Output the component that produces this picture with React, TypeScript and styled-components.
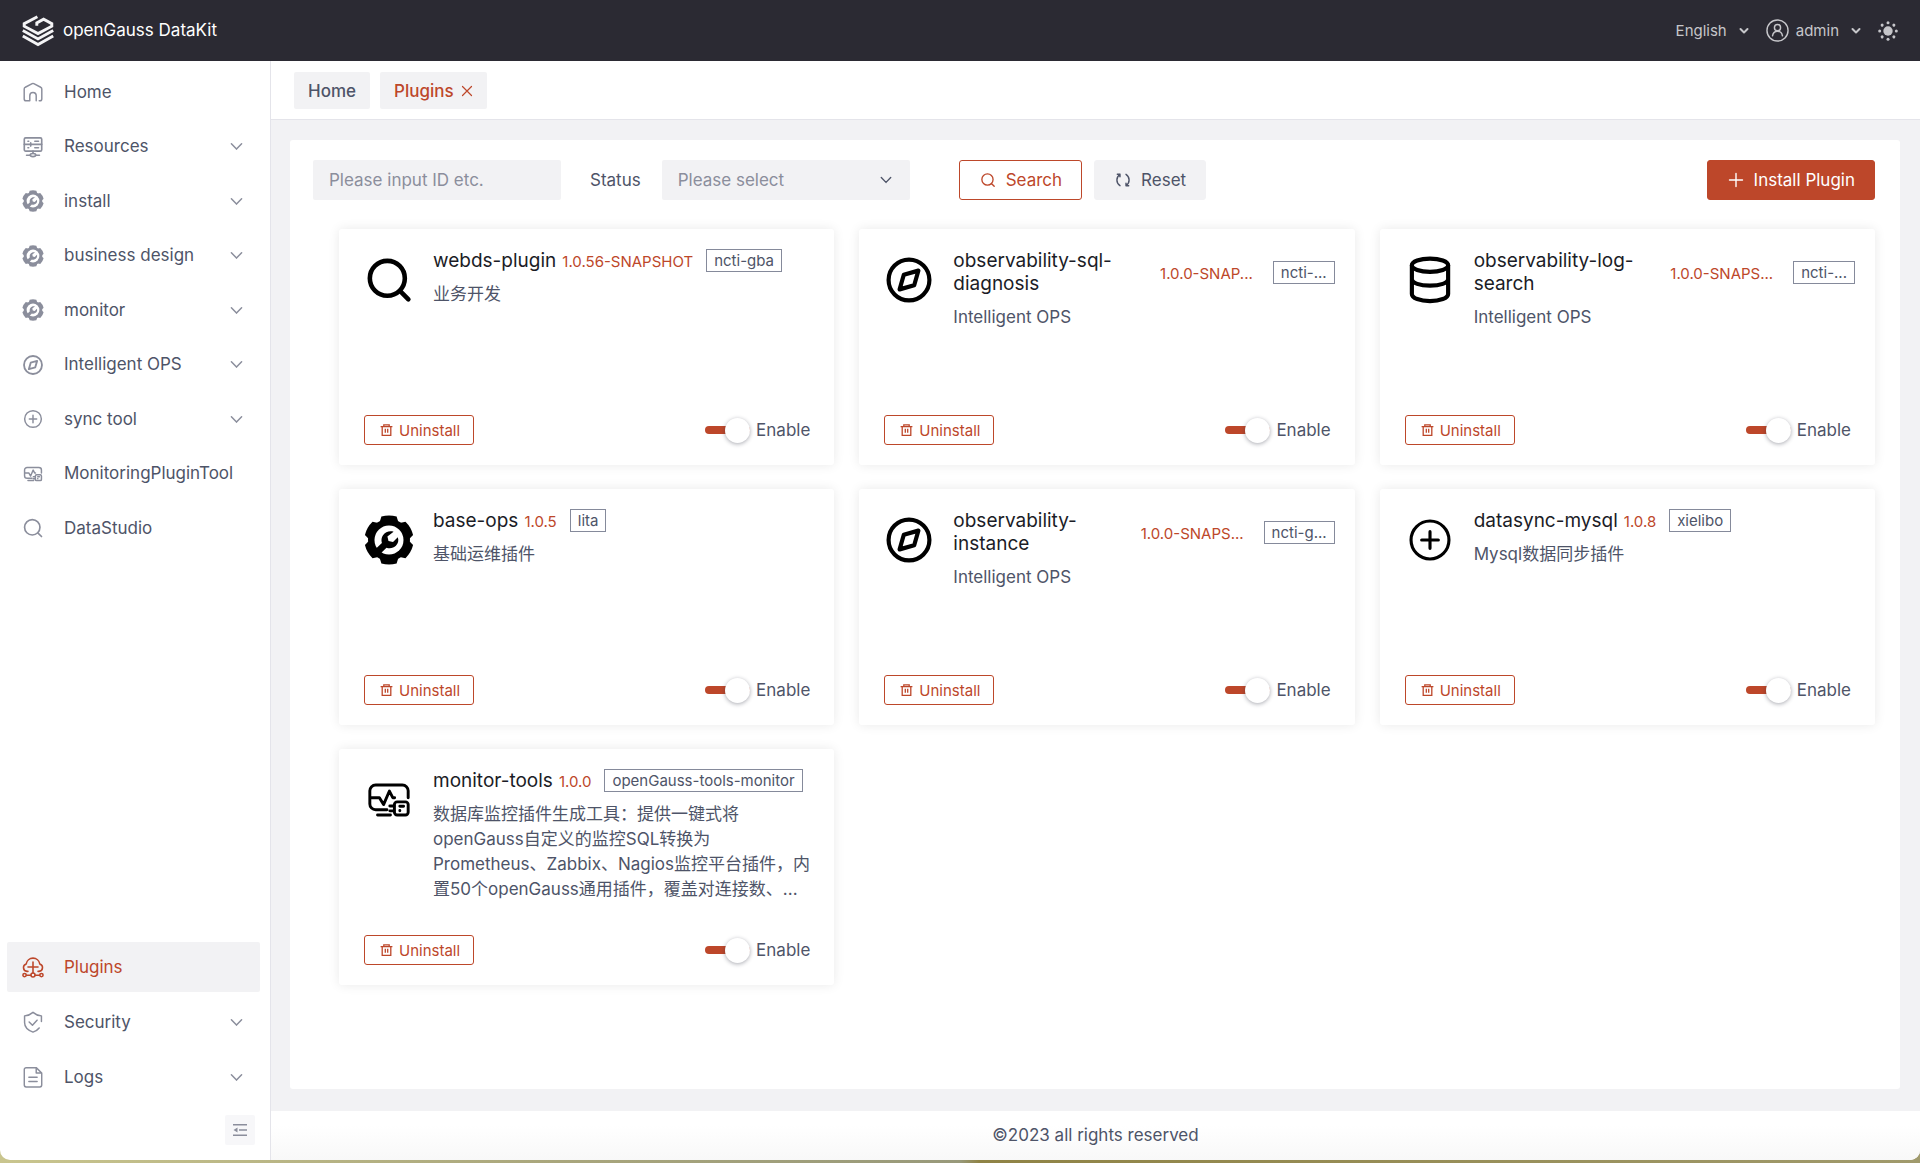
import React from "react";
import styled, { createGlobalStyle } from "styled-components";

const c = {
  accent: "#bd472a",
  text: "#4e5468",
  title: "#1b1c26",
  muted: "#8b8e9c",
  fill: "#f2f2f4",
  header: "#2b2a33",
  line: "#e4e4ea",
};

const Global = createGlobalStyle`
  *, *::before, *::after { box-sizing: border-box; }
  body {
    margin: 0;
    background: linear-gradient(90deg, #c9c58e 0, #a9a67c 29%, #98997a 50%, #8f8345 51%, #a09a6c 100%);
    color: ${c.text};
    font-family: Inter, "Noto Sans CJK SC", sans-serif;
    font-size: 17px;
    line-height: 25px;
  }
  button, input, select { font: inherit; color: inherit; }
  button { cursor: pointer; }
  h2, p, ul { margin: 0; padding: 0; }
  svg { display: block; flex: none; }
`;

const Shell = styled.div`
  display: flex;
  flex-direction: column;
  min-height: calc(100vh - 3px);
  margin-bottom: 3px;
  border-radius: 0 0 10px 10px;
  overflow: hidden;
  background: #fff;
`;

const Header = styled.header`
  display: flex;
  align-items: center;
  justify-content: space-between;
  height: 61px;
  padding: 0 22px;
  background: ${c.header};
  color: #fff;
`;

const Brand = styled.a`
  display: flex;
  align-items: center;
  gap: 9px;
  color: inherit;
  text-decoration: none;
`;

const HeaderTools = styled.div`
  display: flex;
  align-items: center;
  gap: 17px;
  color: #c6c6ca;
  font-size: 15px;
`;

const HeaderButton = styled.button`
  display: flex;
  align-items: center;
  gap: 12px;
  padding: 0;
  border: 0;
  background: none;
`;

const UserName = styled.span`
  display: flex;
  align-items: center;
  gap: 7px;
`;

const Body = styled.div`
  display: flex;
  flex: 1;
`;

const Sidebar = styled.nav`
  display: flex;
  flex-direction: column;
  width: 271px;
  padding: 6px 10px 15px 7px;
  border-right: 1px solid ${c.line};
`;

const Menu = styled.ul`
  display: flex;
  flex-direction: column;
  justify-content: space-between;
  gap: 4px;
  list-style: none;
`;

const MainMenu = styled(Menu)`
  min-height: 486px;
`;

const SystemMenu = styled(Menu)`
  gap: 5px;
  margin-top: auto;
`;

const MenuLink = styled.a<{ $active?: boolean }>`
  display: flex;
  align-items: center;
  gap: 20px;
  height: 50px;
  padding: 0 17px 0 15px;
  border-radius: 2px;
  background: ${(p) => (p.$active ? c.fill : "transparent")};
  color: ${(p) => (p.$active ? c.accent : c.text)};
  text-decoration: none;
  white-space: nowrap;
  & > svg { color: ${(p) => (p.$active ? c.accent : c.muted)}; }
  & > svg:nth-of-type(2) { margin-left: auto; }
`;

const Collapse = styled.button`
  display: grid;
  place-items: center;
  align-self: flex-end;
  width: 30px;
  height: 30px;
  margin: 13px 5px 0 0;
  padding: 0;
  border: 0;
  border-radius: 2px;
  background: #f7f7f9;
  color: ${c.muted};
`;

const Content = styled.div`
  display: flex;
  flex: 1;
  flex-direction: column;
  min-width: 0;
  background: ${c.fill};
`;

const Tabs = styled.div`
  display: flex;
  align-items: center;
  gap: 10px;
  height: 59px;
  padding: 0 23px;
  border-bottom: 1px solid ${c.line};
  background: #fff;
`;

const Tab = styled.button<{ $active?: boolean }>`
  display: flex;
  align-items: center;
  gap: 7px;
  height: 37px;
  padding: 2px 14px 0;
  border: 0;
  border-radius: 2px;
  background: ${c.fill};
  color: ${(p) => (p.$active ? c.accent : c.text)};
  font-weight: 500;
`;

const Panel = styled.main`
  flex: 1;
  margin: 20px 20px 22px 19px;
  padding: 20px 25px 24px 23px;
  border-radius: 3px;
  background: #fff;
`;

const Filters = styled.form`
  display: flex;
  align-items: center;
`;

const TextBox = styled.input`
  width: 248px;
  height: 40px;
  padding: 0 16px;
  border: 0;
  border-radius: 2px;
  background: ${c.fill};
  &::placeholder { color: ${c.muted}; opacity: 1; }
`;

const StatusLabel = styled.label`
  margin: 0 21px 0 29px;
`;

const SelectBox = styled.div`
  display: grid;
  align-items: center;
  width: 248px;
  & > * { grid-area: 1 / 1; }
  & > svg { justify-self: end; margin-right: 18px; pointer-events: none; }
`;

const Select = styled.select`
  appearance: none;
  width: 100%;
  height: 40px;
  padding: 0 16px;
  border: 0;
  border-radius: 2px;
  background: ${c.fill};
  color: ${c.muted};
`;

const Actions = styled.div`
  display: flex;
  gap: 12px;
  margin-left: 49px;
`;

const Button = styled.button<{ $kind: "outline" | "plain" | "primary" }>`
  display: flex;
  align-items: center;
  gap: 10px;
  height: 40px;
  padding: 0 19px 0 20px;
  border: 1px solid ${(p) => (p.$kind === "plain" ? c.fill : c.accent)};
  border-radius: 3px;
  background: ${(p) => ({ outline: "#fff", plain: c.fill, primary: c.accent })[p.$kind]};
  color: ${(p) => ({ outline: c.accent, plain: c.text, primary: "#fff" })[p.$kind]};
  white-space: nowrap;
`;

const InstallButton = styled(Button)`
  margin-left: auto;
`;

const Grid = styled.section`
  display: grid;
  grid-template-columns: repeat(3, minmax(0, 1fr));
  gap: 24px 25px;
  margin-top: 29px;
  padding-left: 26px;
`;

const Card = styled.article`
  display: flex;
  flex-direction: column;
  justify-content: space-between;
  min-height: 236px;
  padding: 20px 20px 20px 25px;
  border-radius: 3px;
  background: #fff;
  box-shadow: 0 0 12px rgba(0, 0, 0, 0.09);
`;

const CardTop = styled.div`
  display: flex;
  gap: 19px;
  color: #000;
  & > svg { margin-top: 6px; }
`;

const Info = styled.div`
  flex: 1;
  min-width: 0;
`;

const Heading = styled.div`
  display: flex;
  align-items: center;
`;

const Name = styled.h2<{ $wrap?: boolean }>`
  flex: ${(p) => (p.$wrap ? "1" : "none")};
  min-width: 0;
  color: ${c.title};
  font-size: 19px;
  font-weight: 400;
  line-height: 23px;
`;

const Version = styled.span<{ $short?: boolean }>`
  margin: 2px ${(p) => (p.$short ? 20 : 13)}px 0 6px;
  color: ${c.accent};
  font-size: 15px;
  line-height: 21px;
  white-space: nowrap;
`;

const Tag = styled.span`
  padding: 0 7px;
  border: 1px solid #858a9b;
  color: ${c.text};
  font-size: 15px;
  line-height: 21px;
  white-space: nowrap;
`;

const Description = styled.p`
  margin-top: 10px;
  color: ${c.text};
`;

const CardFoot = styled.div`
  display: flex;
  align-items: center;
  justify-content: space-between;
  padding-right: 4px;
`;

const Uninstall = styled.button`
  display: flex;
  align-items: center;
  gap: 6px;
  height: 30px;
  padding: 0 13px 0 15px;
  border: 1px solid ${c.accent};
  border-radius: 3px;
  background: #fff;
  color: ${c.accent};
  font-size: 15px;
`;

const SwitchLabel = styled.label`
  display: flex;
  align-items: center;
  gap: 6px;
`;

const Switch = styled.input`
  appearance: none;
  display: grid;
  align-items: center;
  width: 45px;
  height: 26px;
  margin: 0;
  &::before, &::after { content: ""; grid-area: 1 / 1; }
  &::before { height: 8px; border-radius: 4px; background: #c9cdd4; }
  &::after {
    width: 25px;
    height: 25px;
    border-radius: 50%;
    background: #fff;
    box-shadow: 0 1px 4px rgba(40, 42, 60, 0.4);
  }
  &:checked::before { background: ${c.accent}; }
  &:checked::after { justify-self: end; }
`;

const Footer = styled.footer`
  height: 49px;
  background: linear-gradient(#fff 30%, #f8f8f8);
  line-height: 49px;
  text-align: center;
`;

type IconProps = { size?: number; weight?: number };

const Stroke = ({ size = 22, weight = 1.6, box = 24, children }: IconProps & { box?: number; children: React.ReactNode }) => (
  <svg width={size} height={size} viewBox={`0 0 ${box} ${box}`} fill="none" stroke="currentColor" strokeWidth={weight} strokeLinecap="round" strokeLinejoin="round" aria-hidden="true">
    {children}
  </svg>
);

const Logo = () => (
  <svg width="32" height="32" viewBox="0 0 32 32" fill="none" stroke="#f4f4f6" strokeWidth="2.9" aria-hidden="true">
    <path d="M15.4 1.8 2.2 8.6v2.6L16 18.6l13.8-7.4V8.6L21.6 4.2l-6.8 3.7v2.8" />
    <path d="M.8 15.6 16 23.9l15.2-8.3M.8 21 16 29.5l15.2-8.5" />
  </svg>
);

const Home = () => (
  <Stroke>
    <path d="M8.5 21.5H4.4c-1.1 0-2-.9-2-2V8.6c0-.8.4-1.5 1.2-1.8l7.5-3.9c.6-.3 1.2-.3 1.8 0l7.5 3.9c.7.3 1.2 1 1.2 1.8v10.9c0 1.1-.9 2-2 2h-.8M8.5 21.5V16a3.5 3.5 0 0 1 7 0v5.5" />
  </Stroke>
);

const Resources = () => (
  <Stroke weight={1.8}>
    <rect x="2.5" y="2" width="19" height="14.5" rx="1.5" />
    <path d="M2.5 9.2h19M6.5 5.7h.8M9.5 7.5v3.5M14 5.7h4M6.5 12.8h.8M14 12.8h4M12 16.5v2.6M5 21h4M15 21h4" />
    <ellipse cx="12" cy="20.8" rx="3" ry="1.7" />
  </Stroke>
);

const Gear = ({ size = 24 }: IconProps) => (
  <svg width={size} height={size} viewBox="0 0 50 50" fill="currentColor" aria-hidden="true">
    <circle cx="25" cy="25" r="21" />
    {[0, 60, 120].map((a) => (
      <path key={a} d="M16 6 17.4 1.6Q25-.6 32.6 1.6L34 6V44L32.6 48.4Q25 50.6 17.4 48.4L16 44Z" transform={`rotate(${a} 25 25)`} />
    ))}
    <circle cx="25" cy="25" r="14.5" fill="#fff" />
    <path d="M29.6 16.7c-4-1.2-8.3.2-10.6 3.6-1.6 2.4-1.9 5.2-1.1 7.7L11 34.5 15.5 39.5 22.5 32.7c3.2 1.2 7.1.5 9.4-1.9 2.4-2.5 3-5.7 1.9-8.6L29 27l-4.5-1-1.1-4.4Z" />
  </svg>
);

const Compass = ({ size = 22, weight = 2 }: IconProps) => (
  <Stroke size={size} weight={weight}>
    <circle cx="12" cy="12" r="9.8" />
    <path d="m16.5 7.5-2 7-7 2 2-7Z" />
  </Stroke>
);

const PlusCircle = ({ size, weight }: IconProps) => (
  <Stroke size={size} weight={weight}>
    <circle cx="12" cy="12" r="9.1" />
    <path d="M12 8v8M8 12h8" />
  </Stroke>
);

const MonitorChip = ({ size = 22, weight }: IconProps) => (
  <Stroke size={size} weight={weight}>
    <path d="M11 16.7H5.6a2.8 2.8 0 0 1-2.8-2.8V7.6a2.8 2.8 0 0 1 2.800-2.800h12.800a2.800 2.800 0 0 1 2.800 2.800v3.300M6.500 19.200h6.200M2.800 10.900h4.600l2 3.300 2.800-6.500 1.600 3.200h.9" />
    <rect x="14.600" y="12.900" width="6.600" height="6.300" rx="1.300" />
    <path d="M12.400 14.900h2M12.400 17.200h2M17.200 15h1.800M17.200 17v.2" />
  </Stroke>
);

const Search = ({ size, weight }: IconProps) => (
  <Stroke size={size} weight={weight}>
    <circle cx="11.2" cy="11.2" r="8.4" />
    <path d="m17.5 17.5 3.8 3.8" />
  </Stroke>
);

const Database = () => (
  <Stroke size={50} weight={2}>
    <ellipse cx="12" cy="4.9" rx="8.7" ry="3.2" />
    <path d="M3.3 4.9v13.8c0 2 3.9 3.4 8.7 3.4s8.7-1.4 8.7-3.4V4.9M3.3 11.5c0 2 3.9 3.2 8.7 3.2s8.7-1.2 8.7-3.2" />
  </Stroke>
);

const CloudPlus = () => (
  <Stroke weight={1.7}>
    <path d="M6.5 16.8H5.4A4.2 4.2 0 0 1 4.6 8.6 7.5 7.5 0 0 1 19.4 8.6a4.2 4.2 0 0 1-.8 8.2h-1.1M12 6.5v12M6.5 12h11M5 21h4.5M14.5 21H19" />
    <circle cx="2.8" cy="20.8" r="1.8" />
    <circle cx="12" cy="20.8" r="2.2" />
    <circle cx="21.2" cy="20.8" r="1.8" />
  </Stroke>
);

const Shield = () => (
  <Stroke>
    <path d="M21.2 11.5V5.3C17.5 5 14.5 3.8 12 1.5 9.5 3.8 6.5 5 2.8 5.3v7.2c0 5 3.7 8.5 9.2 10.5 3-1 5.2-2.5 6.7-4.5M7.8 12l3.6 3.5 5-5.5" />
  </Stroke>
);

const Doc = () => (
  <Stroke>
    <path d="M15.5 1.8H4.5a2 2 0 0 0-2 2v17a2 2 0 0 0 2 2h15a2 2 0 0 0 2-2V7.6ZM15.5 1.8v5.8h6M7.5 12.2h9M7.5 17h9" />
  </Stroke>
);

const Chevron = ({ size = 13 }: IconProps) => (
  <Stroke size={size} box={14}>
    <path d="m1.5 4 5.500 5.800L12.500 4" />
  </Stroke>
);

const Caret = () => (
  <Stroke size={10} box={10} weight={2}>
    <path d="M1.5 3 5 6.5 8.5 3" />
  </Stroke>
);

const Avatar = () => (
  <Stroke size={23} weight={1.5}>
    <circle cx="12" cy="12" r="11" />
    <circle cx="12" cy="9" r="3.2" />
    <path d="M6.8 17.5c.6-3 2.5-4.7 5.2-4.7s4.6 1.7 5.2 4.7" />
  </Stroke>
);

const Sun = () => (
  <svg width="20" height="20" viewBox="0 0 20 20" fill="currentColor" aria-hidden="true">
    <circle cx="10" cy="10" r="4.7" />
    {[0, 45, 90, 135, 180, 225, 270, 315].map((a) => (
      <circle key={a} cx="10" cy="1.7" r="1.5" transform={`rotate(${a} 10 10)`} />
    ))}
  </svg>
);

const Close = () => (
  <Stroke size={12} box={12} weight={1.2}>
    <path d="m1.5 1.5 9 9M10.5 1.5l-9 9" />
  </Stroke>
);

const Reset = () => (
  <Stroke size={16} box={16} weight={1.4}>
    <path d="M2.3 2.3H5v2.5M5 2.3a6.8 6.8 0 0 0 0 11.4M13.7 13.7H11v-2.5M11 13.7a6.8 6.8 0 0 0 0-11.4" />
  </Stroke>
);

const Plus = () => (
  <Stroke size={16} box={16} weight={1.4}>
    <path d="M8 1.5v13M1.5 8h13" />
  </Stroke>
);

const Trash = () => (
  <svg width="13" height="13" viewBox="0 0 13 13" fill="none" stroke="currentColor" strokeWidth="1.3" aria-hidden="true">
    <path d="M.6 2.6h11.8M3.8 2.6V.8h5.4v1.8M2.2 2.6v8.8h8.6V2.6M5.3 4.8v4M7.7 4.8v4" />
  </svg>
);

const Fold = () => (
  <svg width="14" height="12" viewBox="0 0 14 12" fill="currentColor" aria-hidden="true">
    <path d="M0 0h14v1.5H0ZM6 5.2h8v1.5H6ZM0 10.4h14v1.5H0ZM4.5 3.5v5L.5 6Z" />
  </svg>
);

type Entry = { label: string; icon: React.ReactNode; expandable?: boolean; active?: boolean };

const mainEntries: Entry[] = [
  { label: "Home", icon: <Home /> },
  { label: "Resources", icon: <Resources />, expandable: true },
  { label: "install", icon: <Gear size={22} />, expandable: true },
  { label: "business design", icon: <Gear size={22} />, expandable: true },
  { label: "monitor", icon: <Gear size={22} />, expandable: true },
  { label: "Intelligent OPS", icon: <Compass />, expandable: true },
  { label: "sync tool", icon: <PlusCircle />, expandable: true },
  { label: "MonitoringPluginTool", icon: <MonitorChip /> },
  { label: "DataStudio", icon: <Search weight={1.8} /> },
];

const systemEntries: Entry[] = [
  { label: "Plugins", icon: <CloudPlus />, active: true },
  { label: "Security", icon: <Shield />, expandable: true },
  { label: "Logs", icon: <Doc />, expandable: true },
];

type Plugin = { name: string; version: string; tag: string; text: string; icon: React.ReactNode; short?: boolean };

const plugins: Plugin[] = [
  { name: "webds-plugin", version: "1.0.56-SNAPSHOT", tag: "ncti-gba", text: "业务开发", icon: <Search size={50} weight={2.2} /> },
  { name: "observability-sql-diagnosis", version: "1.0.0-SNAP...", tag: "ncti-...", text: "Intelligent OPS", icon: <Compass size={50} />, short: true },
  { name: "observability-log-search", version: "1.0.0-SNAPS...", tag: "ncti-...", text: "Intelligent OPS", icon: <Database />, short: true },
  { name: "base-ops", version: "1.0.5", tag: "lita", text: "基础运维插件", icon: <Gear size={50} /> },
  { name: "observability-instance", version: "1.0.0-SNAPS...", tag: "ncti-g...", text: "Intelligent OPS", icon: <Compass size={50} />, short: true },
  { name: "datasync-mysql", version: "1.0.8", tag: "xielibo", text: "Mysql数据同步插件", icon: <PlusCircle size={50} weight={1.5} /> },
  {
    name: "monitor-tools",
    version: "1.0.0",
    tag: "openGauss-tools-monitor",
    text: "数据库监控插件生成工具：提供一键式将openGauss自定义的监控SQL转换为Prometheus、Zabbix、Nagios监控平台插件，内置50个openGauss通用插件，覆盖对连接数、...",
    icon: <MonitorChip size={50} weight={1.4} />,
  },
];

const Entries = ({ items }: { items: Entry[] }) => (
  <>
    {items.map((e) => (
      <li key={e.label}>
        <MenuLink href="#" $active={e.active} aria-current={e.active ? "page" : undefined}>
          {e.icon}
          {e.label}
          {e.expandable && <Chevron />}
        </MenuLink>
      </li>
    ))}
  </>
);

export default function App() {
  return (
    <>
      <Global />
      <Shell>
        <Header>
          <Brand href="#">
            <Logo />
            openGauss DataKit
          </Brand>
          <HeaderTools>
            <HeaderButton type="button">
              English
              <Caret />
            </HeaderButton>
            <HeaderButton type="button">
              <UserName>
                <Avatar />
                admin
              </UserName>
              <Caret />
            </HeaderButton>
            <HeaderButton type="button" aria-label="Theme">
              <Sun />
            </HeaderButton>
          </HeaderTools>
        </Header>
        <Body>
          <Sidebar>
            <MainMenu>
              <Entries items={mainEntries} />
            </MainMenu>
            <SystemMenu>
              <Entries items={systemEntries} />
            </SystemMenu>
            <Collapse type="button" aria-label="Collapse menu">
              <Fold />
            </Collapse>
          </Sidebar>
          <Content>
            <Tabs>
              <Tab type="button">Home</Tab>
              <Tab type="button" $active>
                Plugins
                <Close />
              </Tab>
            </Tabs>
            <Panel>
              <Filters onSubmit={(e) => e.preventDefault()}>
                <TextBox type="text" placeholder="Please input ID etc." aria-label="Plugin ID" />
                <StatusLabel htmlFor="status">Status</StatusLabel>
                <SelectBox>
                  <Select id="status" defaultValue="">
                    <option value="">Please select</option>
                  </Select>
                  <Chevron size={12} />
                </SelectBox>
                <Actions>
                  <Button type="submit" $kind="outline">
                    <Search size={16} weight={2} />
                    Search
                  </Button>
                  <Button type="reset" $kind="plain">
                    <Reset />
                    Reset
                  </Button>
                </Actions>
                <InstallButton type="button" $kind="primary">
                  <Plus />
                  Install Plugin
                </InstallButton>
              </Filters>
              <Grid>
                {plugins.map((p) => (
                  <Card key={p.name}>
                    <CardTop>
                      {p.icon}
                      <Info>
                        <Heading>
                          <Name $wrap={p.short}>{p.name}</Name>
                          <Version $short={p.short}>{p.version}</Version>
                          <Tag>{p.tag}</Tag>
                        </Heading>
                        <Description>{p.text}</Description>
                      </Info>
                    </CardTop>
                    <CardFoot>
                      <Uninstall type="button">
                        <Trash />
                        Uninstall
                      </Uninstall>
                      <SwitchLabel>
                        <Switch type="checkbox" role="switch" defaultChecked />
                        Enable
                      </SwitchLabel>
                    </CardFoot>
                  </Card>
                ))}
              </Grid>
            </Panel>
            <Footer>©2023 all rights reserved</Footer>
          </Content>
        </Body>
      </Shell>
    </>
  );
}
